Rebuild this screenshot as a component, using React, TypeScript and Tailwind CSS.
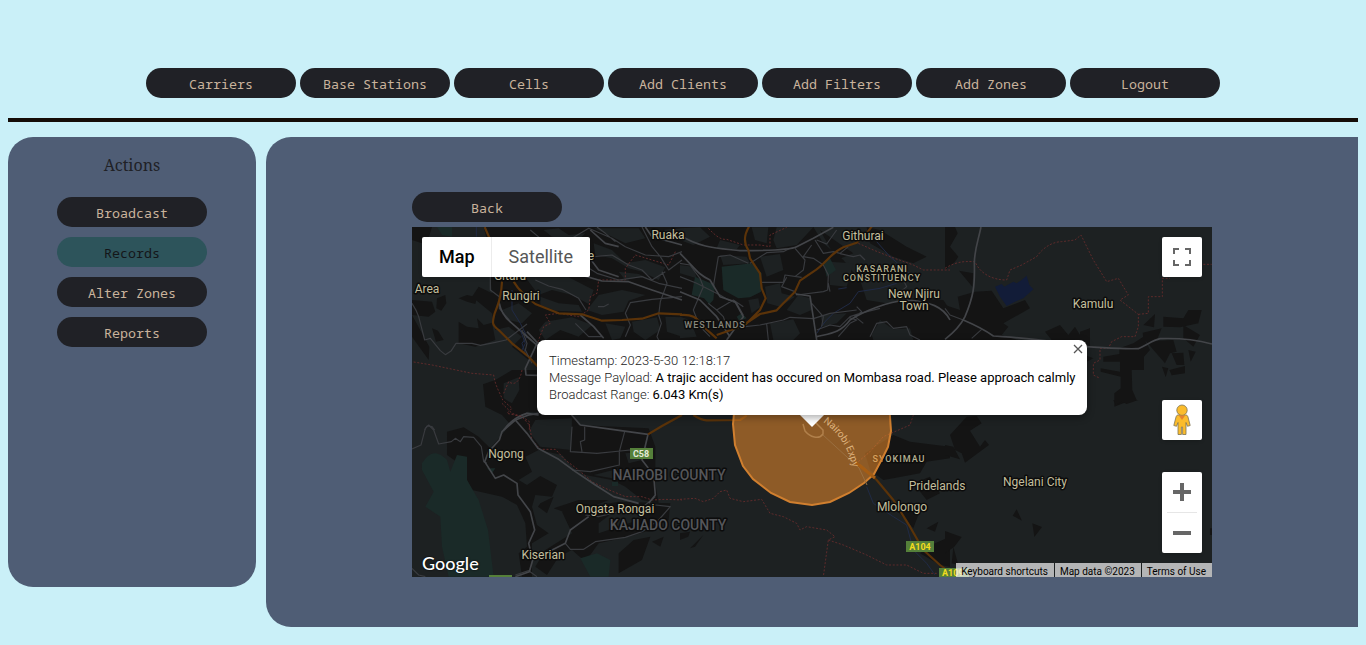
import React from "react";

const navItems = ["Carriers", "Base Stations", "Cells", "Add Clients", "Add Filters", "Add Zones", "Logout"];
const actionItems = ["Broadcast", "Records", "Alter Zones", "Reports"];

type PillProps = { label: string; active?: boolean };

function PillButton({ label, active = false }: PillProps) {
  return (
    <button
      type="button"
      className={
        "h-[30px] w-[150px] shrink-0 cursor-pointer rounded-full pt-[2px] font-['Noto_Sans_Mono','DejaVu_Sans_Mono',monospace] text-[13.333px] leading-[18px] " +
        (active ? "bg-[#2d545b] text-[#141619]" : "bg-[#202126] text-[#c9b39c]")
      }
    >
      {label}
    </button>
  );
}

type Tile = {
  x: number;
  y: number;
  built?: string;
  land?: string;
  parks?: string;
  water?: string;
  streams?: string;
  minor?: string;
  major?: string;
  highway?: string;
  border?: string;
};

/* Tile geometry is stored at three units per screen pixel. */
const tiles: Tile[] = [
  {
    x: 0,
    y: -47,
    built:
      "M0 141H60L50 175L30 190L0 180Z M215 141H810V540H350L300 500L330 470L290 440L250 450L240 400L180 350L200 320L240 340L235 290L280 290L230 200Z M75 355L100 345L103 370L88 392L73 385Z M140 355L165 345L195 352L190 372L165 365Z M0 360L60 365L70 395L50 410L0 405Z M0 405L52 500L50 540L0 470Z M140 425L165 440L200 445L195 415L215 435L240 428L250 480L190 500L140 490Z M60 445L78 452L95 480L72 485Z",
    land:
      "M395 150L440 145L470 165L520 160L500 180L420 170Z M545 145L680 145L700 175L640 190L590 165Z M545 190L600 210L640 250L700 240L760 262L740 300L690 275L650 265L600 235L550 225Z M340 292L470 292L545 330L530 372L480 345L420 330L380 345Z M385 350L440 370L500 375L510 395L430 392L385 375Z M560 345L630 330L700 345L650 362L635 395L570 405L525 390Z M400 425L480 412L540 435L500 470L445 450L400 480L380 450Z M580 430L640 440L625 475L600 480Z M660 425L735 412L745 450L700 480L665 455Z M760 410L810 412V470L765 455Z M270 390L320 370L360 400L330 430L290 420Z M620 275L680 282L720 300L690 290L640 300Z M755 150L810 145V180L770 172Z",
    parks: "M75 141H120V170L90 165Z",
    minor:
      "M0 370C10 385 15 395 20 410L38 480L55 475L85 512L100 524L118 512L132 490H180L205 496L250 487L282 480L345 432 M235 290V330L262 350V385L300 430 M355 150L385 175V195L400 205 M480 175L530 145L600 175L640 200L700 225L770 230L810 215 M400 212L440 225L500 245L555 280L620 300L690 290L740 310L810 325 M370 300L410 318L450 328L500 355L522 390 M490 430L530 470L570 470 M545 230L600 225L650 255L690 270L720 300L760 275 M690 141L720 200L745 230L770 270L810 240 M750 275L765 310L745 365L740 405L748 430L735 470L745 490 M810 350L720 358L655 368L640 400L655 435L640 470 M555 141L580 160L610 185 M558 380L575 380L590 372",
    major:
      "M262 370C268 400 280 415 300 430L340 465L378 498 M490 280L570 303L650 305L720 330L810 360 M530 230L560 270L620 290 M535 150L580 190L620 200 M700 141L720 170L810 195 M505 405L545 440L575 475",
    highway: "M218 141L235 180 M270 305C268 345 262 365 248 400C240 430 240 435 260 450L300 490L350 530 M305 305C320 330 340 350 370 372L440 400L510 403L570 422L630 420L690 416L740 400L810 403",
    border: "M790 215L770 255L670 225L640 265V300H560L555 340L535 350L530 390L500 410L440 400L400 405L415 430L395 440L380 480L370 500",
    streams: "M193 141V170 M300 330V390L325 430L345 470L330 490L340 520",
  },
  {
    x: 268,
    y: -7,
    built:
      "M0 21H400L430 70L490 120L540 180L560 240L620 250L700 235L790 240L810 270V360H0Z M420 30L520 100L470 120Z M560 21L600 30L680 80L740 110L700 130L640 110L570 70Z",
    land:
      "M0 25L60 22L90 50L40 75L0 60Z M120 60L180 75L170 88L110 85Z M215 22L265 22L260 70L225 60Z M290 22H400L350 75L290 85L280 60Z M0 135L40 140L50 175L0 160Z M120 105L200 110L210 130L130 135Z M255 200L300 190L305 220L345 230L300 260L262 250Z M270 310L340 298L360 340L340 360H280Z M355 225L390 235L395 270L360 285L320 270Z M445 125L520 130L500 200L450 195Z M205 240L235 235L240 262L215 280Z M575 345L600 300L640 328L690 325L700 360H580Z M0 290L30 300L50 350L0 355Z M420 285L500 280L470 310L430 320Z M240 110L300 102L310 150L260 170Z",
    parks:
      "M125 140L215 130L245 160L243 215L210 232L175 235L130 210Z M45 170L105 195L100 240L88 253L72 235L35 225Z M430 125L450 115L468 150L440 170Z M170 290L185 280L200 295L178 303Z",
    minor:
      "M0 130L30 135L60 175L70 200L40 270L60 320L90 350 M115 110L150 105L205 130 M115 110L100 200 M210 130L260 98L310 95L330 85 M345 85L375 120L370 150L345 170 M245 187H310L315 165L365 172 M320 172L305 200L345 215L350 225L430 215L443 210L445 165L430 135L400 115L370 110L395 75 M405 60L430 100L460 95L480 100L505 80 M410 60L440 72L470 30 M480 101L520 110L540 105L555 120 M670 180L680 200L662 215V240 M450 215L445 190 M0 170L50 190L120 225L145 240L170 250L190 285 M85 250L110 270L130 290L140 320 M195 320L240 315L310 300L330 292L400 296L450 280L530 270 M260 312L265 360 M410 330L450 315L480 320L510 290L540 280L600 265 M508 293L530 300L510 310L475 350 M570 350L590 310L620 305L640 325L680 320L690 345L720 360 M530 260L545 275L525 290L550 310 M395 250L430 290L425 320 M110 270L160 240L190 260",
    major:
      "M0 45C60 85 120 85 180 92C270 92 330 90 350 80L400 55L460 22 M0 100C50 150 50 160 90 180L120 230L165 245L190 290L140 360 M348 222L390 228L398 280L410 360 M410 350C450 340 480 340 510 300C550 275 620 245 680 240C750 245 790 260 810 300 M0 215L60 240L110 290L150 350",
    highway:
      "M0 285C35 282 50 290 70 320L110 355 M207 20C195 40 188 65 205 90L210 115L240 160L245 205L257 235L240 270L195 315L110 345 M195 312L240 282L290 271L310 250L345 215L360 182L400 155C440 130 450 100 490 82L530 68L560 40L575 20",
    border: "M85 25C105 45 120 60 140 58L190 75H240L270 80V45L320 22 M535 70L580 90L630 110L700 135L730 150L810 150",
    streams: "M590 65L630 110L700 170 M410 340L435 305L460 280L510 250L535 215L600 205L650 190 M475 207L500 203",
  },
  {
    x: 533,
    y: -7,
    built:
      "M0 21H30L38 40L15 80L40 110L30 125L0 150Z M42 152L85 160L82 200Z M0 255L45 270L38 230L90 215L140 212L175 265L240 240L255 265L175 310L190 320L170 345L220 360H0Z M300 335L345 315L370 345L390 320L405 345L435 325V380L320 360Z",
    water: "M150 200L170 192L178 200L205 185L215 190L230 180L245 167L253 195L265 208L235 235L210 245L185 258L165 230Z",
    minor: "M80 355L110 328 M0 265L15 285L55 300",
    major: "M108 21C100 60 88 90 88 130C90 200 85 230 60 290C50 310 30 335 0 358 M55 300C90 315 120 330 145 348C200 352 260 355 320 365L430 381",
    border:
      "M0 145C40 120 70 125 90 125C105 160 140 180 185 180L195 150L230 135L275 110C300 75 330 65 350 65L390 60L408 45L445 120L485 185L520 175L550 225L525 240L580 283L580 320L570 350L530 350L500 365L490 385L465 385V420L445 430V465L465 475 M580 283L610 280V230H652V175H675 M775 133H800",
  },
  {
    x: 668,
    y: 83,
    built:
      "M118 115L160 100L190 80L210 120L192 140V180H155L157 240L170 270L130 280L103 290V250L122 235V200L62 185V175L120 185V155H70V140L118 132Z M190 45L225 12L222 52Z M250 20L310 25L325 0H365L355 40L300 52L250 50Z M310 45L360 75L340 110L310 85Z M188 68L245 55L230 92L280 90L290 125L270 130L255 160L190 85Z M275 130L310 128L313 165L290 165Z M325 120L347 125L332 155Z M246 170L265 175L257 202Z M268 180L315 168V190L275 196Z M0 65L30 55V100H0Z M0 130L40 145L20 155H0Z",
    major: "M20 110C80 113 120 118 175 116C200 105 220 90 240 86C290 84 350 90 396 102",
  },
  {
    x: 0,
    y: 73,
    built: "M213 253L250 240L300 210H480V390H310L270 345L220 320Z",
    land: "M275 250L320 232L322 270L300 310L275 295Z M320 350L345 335L480 345V390H330Z",
    minor: "M330 90L345 130L340 150L360 190 M38 390L45 378L60 380L68 390",
    major: "M345 95L378 130 M375 130L340 205L342 225L375 226 M275 390C290 370 310 350 345 340L380 345",
    highway: "M350 170L378 200",
    border: "M5 186L60 195L180 220L245 225C250 260 265 280 272 300L300 325L285 340L330 350L352 365V390 M330 210C325 240 310 260 290 245L275 280",
    streams: "M325 90L340 130L330 150",
  },
  {
    x: 0,
    y: 173,
    built:
      "M105 95L155 82L200 110L235 145L290 80L340 40H480L500 75L710 85L730 140V250L740 310L690 300L640 260L600 240L520 225L485 205L450 165L380 150L340 170L360 215L320 240L345 255L385 228L435 255L420 290L370 285L360 320L375 375L410 400L360 430V530H330L320 460L345 440L340 370L315 315L270 290L180 270L140 190L105 165Z M385 310L425 290L405 340L378 320Z M450 335L620 305L775 310L770 360L700 395L650 410L560 430L520 485L480 450L440 470L405 525L370 500L400 450L480 400Z M425 325L500 300L590 300L480 345Z M620 460L665 420L715 410L690 480L620 520Z M720 425L755 410L745 440Z",
    land: "M370 60L480 55L478 150L430 145L385 140L350 95Z M640 160L700 155L690 180L650 190Z M545 225L625 205L650 240L600 235Z M600 340L700 320L680 360L560 400L560 370Z",
    parks:
      "M30 190C50 160 70 145 105 180L115 215L135 165L165 170V240L200 300L228 390L245 530H110L90 440L85 350L40 320L65 275L30 210Z M505 475L555 460L595 480L590 530H535Z M225 205L250 205L240 220Z M600 245H618V258H600Z",
    minor:
      "M0 147L27 135L40 85L50 75L65 90L80 132L118 125L130 115L145 125L155 110L185 112L208 140L215 185L225 190 M480 80L475 155L555 160L625 153L705 145 M518 80V120L505 125L510 155 M638 95L622 155V195L535 215L480 210 M730 290L700 315L560 350L520 345 M730 315L775 320L740 360L690 395L640 412L550 425L515 448H475L460 430 M0 505L20 525L40 530 M310 525L350 512L375 530",
    major:
      "M380 40L350 45L310 60L270 95L262 120L230 155L218 185L250 235L275 225L315 250L318 285L355 335L368 390L350 430L362 480L352 515L310 530 M310 60L345 100L378 145L440 178L490 215L550 255L605 290L680 310 M475 40L505 75L600 88L708 103L690 180L725 225L730 285L710 310 M410 455L460 430L475 390L530 350",
    highway: "M708 103L750 78L810 45",
    border: "M270 10L300 40L330 50L352 75L360 120L385 148L430 148L460 180L500 210L540 245L580 265L640 290L690 290L720 300L760 298L810 300",
  },
  {
    x: 268,
    y: 173,
    built:
      "M555 160L640 105L690 125L810 140V175L740 185L720 220L640 235L610 240L570 210Z M700 250L750 230L780 280L740 300Z M640 320L700 310L715 345L700 385Z M740 385L775 365L765 395Z M720 460L765 430L810 410V500L780 495Z M30 445L70 405L45 440Z M0 400L30 395L25 410L0 420Z",
    highway: "M40 45C55 55 65 60 80 61L180 60L200 47 M540 195L590 240L640 300L690 380L730 450L780 495L800 510",
    border:
      "M0 298L45 295L70 305L100 295L120 275L140 270L150 295L190 305L245 298L270 340L310 350L350 370L360 390L380 380L440 390L465 410L445 420L430 530 M445 420L490 435L560 465L620 495L680 495L730 520L770 520 M535 185L570 155L610 110L690 75L700 45",
    streams: "M560 260L580 310L640 350L680 375L700 450L740 490L765 525",
  },
  {
    x: 533,
    y: 173,
    built:
      "M15 105L65 50L95 48L110 70L75 92L105 140L120 120L132 135L60 188L50 160L30 150Z M0 135L25 140L45 178L0 165Z M203 347L215 328L231 362Z M262 370L291 381L268 411Z M0 393L50 411L28 440L0 460Z M25 440L40 495L20 490Z M505 0H580L545 12L530 5L512 15Z M795 385H802V405H795Z",
  },
];

function TileShapes({ tile }: { tile: Tile }) {
  return (
    <g transform={`translate(${tile.x} ${tile.y}) scale(0.33333)`}>
      <path d={tile.built} fill="#141414" />
      <path d={tile.land} fill="#1d2122" />
      <path d={tile.parks} fill="#1a2a28" />
      <path d={tile.water} fill="#121c38" />
    </g>
  );
}

function TileLines({ tile }: { tile: Tile }) {
  return (
    <g transform={`translate(${tile.x} ${tile.y}) scale(0.33333)`} fill="none" strokeLinejoin="round">
      <path d={tile.streams} stroke="#202a45" strokeWidth="3" />
      <path d={tile.border} stroke="#6a2c2c" strokeWidth="2.5" strokeDasharray="6 5" />
      <path d={tile.minor} stroke="#393b3f" strokeWidth="3.5" />
      <path d={tile.major} stroke="#434549" strokeWidth="5" />
      <path d={tile.highway} stroke="#5b3309" strokeWidth="6.5" />
    </g>
  );
}

type Label = { text: string; x: number; y: number; kind: "place" | "district" | "dim" | "county" };

const labels: Label[] = [
  { text: "Ruaka", x: 256, y: 12, kind: "place" },
  { text: "Githurai", x: 451, y: 13, kind: "place" },
  { text: "Gitaru", x: 98, y: 53, kind: "place" },
  { text: "e", x: 179, y: 33, kind: "place" },
  { text: "Area", x: 15, y: 66, kind: "place" },
  { text: "Rungiri", x: 109, y: 73, kind: "place" },
  { text: "KASARANI", x: 470, y: 45, kind: "district" },
  { text: "CONSTITUENCY", x: 470, y: 54, kind: "district" },
  { text: "New Njiru", x: 502, y: 71, kind: "place" },
  { text: "Town", x: 502, y: 83, kind: "place" },
  { text: "Kamulu", x: 681, y: 81, kind: "place" },
  { text: "WESTLANDS", x: 303, y: 101, kind: "dim" },
  { text: "Ngong", x: 94, y: 231, kind: "place" },
  { text: "NAIROBI COUNTY", x: 257, y: 253, kind: "county" },
  { text: "KAJIADO COUNTY", x: 256, y: 303, kind: "county" },
  { text: "Ongata Rongai", x: 203, y: 286, kind: "place" },
  { text: "Kiserian", x: 131, y: 332, kind: "place" },
  { text: "SYOKIMAU", x: 487, y: 235, kind: "district" },
  { text: "Pridelands", x: 525, y: 263, kind: "place" },
  { text: "Mlolongo", x: 490, y: 284, kind: "place" },
  { text: "Ngelani City", x: 623, y: 259, kind: "place" },
];

const labelStyles = {
  place: "fill-[#c3bf9d] text-[12px] font-normal",
  district: "fill-[#b5b192] text-[9px] font-medium tracking-[1px]",
  dim: "fill-[#86867a] text-[9px] font-medium tracking-[1px]",
  county: "fill-[#55565a] text-[14px] font-medium",
};

function MapCanvas() {
  return (
    <svg
      viewBox="0 0 800 350"
      preserveAspectRatio="xMidYMid slice"
      className="absolute inset-0 size-full font-['Roboto',sans-serif]"
      role="img"
      aria-label="Map of Nairobi"
    >
      <defs>
        <path id="expy" d="M411 195C425 205 436 217 442 246" />
      </defs>
      <rect width="800" height="350" fill="#1d2122" />
      {tiles.map((tile, i) => (
        <TileShapes key={i} tile={tile} />
      ))}
      {tiles.map((tile, i) => (
        <TileLines key={i} tile={tile} />
      ))}

      {labels.map((l) => (
        <text
          key={l.text}
          x={l.x}
          y={l.y}
          textAnchor="middle"
          stroke="#0c0c0c"
          strokeWidth="3"
          strokeLinejoin="round"
          paintOrder="stroke"
          className={labelStyles[l.kind]}
        >
          {l.text}
        </text>
      ))}

      <g className="text-[9px] font-bold">
        <rect x="218" y="221" width="23" height="11" fill="#55803a" />
        <text x="229" y="230" textAnchor="middle" fill="#e4ead8">C58</text>
        <rect x="494" y="314" width="28" height="11" fill="#55803a" />
        <text x="508" y="323" textAnchor="middle" fill="#f2dc1d">A104</text>
        <rect x="527" y="341" width="30" height="11" fill="#55803a" />
        <text x="530" y="349" fill="#f2dc1d">A109</text>
        <rect x="77" y="348" width="23" height="4" fill="#55803a" />
      </g>

      <polygon
        points="400,118 416,120 431,125 446,133 459,144 470,159 477,176 479,204 476,220 470,232 462,247 452,256 437,266 418,275 400,278 378,275 359,266 341,252 331,239 323,218 321,197 323,176 331,158 343,142 359,128 378,120"
        fill="#f7922c"
        fillOpacity="0.52"
        stroke="#d07f2f"
        strokeWidth="2"
      />
      <path d="M391 197L393 204C398 210 407 213 411 207L411 203L402 194" fill="none" stroke="#b1804b" strokeWidth="1.5" />
      <path d="M411 208L447 241L455 258" fill="none" stroke="#9a6f40" strokeWidth="1" />
      <path d="M443 235L463 251" fill="none" stroke="#a55d14" strokeWidth="3" />
      <text className="fill-[#deb27c] text-[10px]">
        <textPath href="#expy">Nairobi Expy</textPath>
      </text>
    </svg>
  );
}

function Pegman() {
  return (
    <svg viewBox="0 0 18 32" className="h-[32px] w-[18px]" aria-hidden="true">
      <g fill="#fbbc2c" stroke="#7d7454" strokeWidth="0.8" strokeLinejoin="round">
        <path d="M5.500 11H12.500C14 11 14.500 11.500 15 13L17.200 21.500L14.500 22.300L13 18.500V30.500H9.600V23H8.400V30.500H5V18.500L3.500 22.300L0.800 21.500L3 13C3.500 11.500 4 11 5.500 11Z" />
        <circle cx="9" cy="6.200" r="5.200" />
      </g>
      <path d="M5.800 11.500H12.200L9 16Z" fill="#e6822d" />
    </svg>
  );
}

function MapControls() {
  const box = "absolute right-[10px] flex w-[40px] flex-col rounded-[2px] bg-white shadow-[0_1px_4px_-1px_rgba(0,0,0,0.3)]";
  return (
    <>
      <div className="absolute top-[10px] left-[10px] flex h-[40px] rounded-[2px] bg-white text-[18px] leading-[40px] shadow-[0_1px_4px_-1px_rgba(0,0,0,0.3)]">
        <button type="button" className="pr-[16px] pl-[17px] font-medium text-black">Map</button>
        <button type="button" className="border-l border-[#ececec] px-[17px] text-[#565656]">Satellite</button>
      </div>

      <div className={box + " top-[10px]"}>
        <button type="button" aria-label="Toggle fullscreen view" className="flex h-[40px] items-center justify-center">
          <svg viewBox="0 0 18 18" className="size-[18px]" fill="#666666">
            <path d="M0 0V6H2V2H6V0Z M16 0H12V2H16V6H18V0Z M16 16H12V18H18V12H16Z M2 12H0V18H6V16H2Z" />
          </svg>
        </button>
      </div>

      <div className={box + " top-[173px]"}>
        <button type="button" aria-label="Drag Pegman onto the map to open Street View" className="flex h-[40px] items-center justify-center">
          <Pegman />
        </button>
      </div>

      <div className={box + " bottom-[24px]"}>
        <button type="button" aria-label="Zoom in" className="flex h-[40px] items-center justify-center">
          <svg viewBox="0 0 18 18" className="size-[18px]" fill="#666666">
            <path d="M7 0H11V7H18V11H11V18H7V11H0V7H7Z" />
          </svg>
        </button>
        <div className="mx-[5px] h-px bg-[#e6e6e6]" />
        <button type="button" aria-label="Zoom out" className="flex h-[40px] items-center justify-center">
          <svg viewBox="0 0 18 18" className="size-[18px]" fill="#666666">
            <path d="M0 7H18V11H0Z" />
          </svg>
        </button>
      </div>
    </>
  );
}

function InfoWindow() {
  return (
    <div className="absolute top-[113px] left-1/2 w-[550px] -translate-x-1/2">
      <div className="relative h-[75px] rounded-[8px] bg-white px-[12px] pt-[12px] text-[13px] leading-[17px] font-light whitespace-nowrap text-[#222222] shadow-[0_2px_7px_1px_rgba(0,0,0,0.3)]">
        <p>Timestamp: 2023-5-30 12:18:17</p>
        <p>
          Message Payload: <b className="font-normal text-black">A trajic accident has occured on Mombasa road. Please approach calmly</b>
        </p>
        <p>
          Broadcast Range: <b className="font-normal text-black">6.043 Km(s)</b>
        </p>
        <button type="button" aria-label="Close" className="absolute top-[4px] right-[4px] flex size-[10px] items-center justify-center">
          <svg viewBox="0 0 10 10" className="size-[10px]" stroke="#555555" strokeWidth="1.3">
            <path d="M1 1L9 9M9 1L1 9" />
          </svg>
        </button>
      </div>
      <svg viewBox="0 0 24 12" className="mx-auto h-[12px] w-[24px]" fill="#ffffff" aria-hidden="true">
        <path d="M0 0H24L12 12Z" />
      </svg>
    </div>
  );
}

function MapView() {
  return (
    <div className="relative h-[350px] w-full overflow-hidden bg-[#1d2122] font-['Roboto',sans-serif]">
      <MapCanvas />
      <MapControls />
      <InfoWindow />
      <a
        href="#google"
        aria-label="Google"
        className="absolute bottom-[2px] left-[10px] font-['Lato',sans-serif] text-[18px] leading-[24px] font-medium text-white [text-shadow:0_0_2px_#000]"
      >
        Google
      </a>
      <div className="absolute right-0 bottom-0 flex h-[14px] text-[10px] leading-[18px] text-black">
        <button type="button" className="bg-[#f5f5f5]/70 pt-px pr-[6px] pl-[5px] leading-[16px]">Keyboard shortcuts</button>
        <span className="ml-px bg-[#f5f5f5]/70 pr-[6px] pl-[5px]">Map data ©2023</span>
        <a href="#terms" className="ml-px bg-[#f5f5f5]/70 pr-[6px] pl-[5px]">Terms of Use</a>
      </div>
    </div>
  );
}

export default function App() {
  return (
    <div className="min-h-screen bg-[#caf0f8] px-2 pb-[18px]">
      <nav aria-label="Main" className="flex flex-wrap justify-center gap-1 border-b-4 border-[#140d08] pt-[68px] pb-[20px]">
        {navItems.map((item) => (
          <PillButton key={item} label={item} />
        ))}
      </nav>

      <div className="mt-[15px] flex items-start gap-[10px]">
        <aside className="flex min-h-[450px] w-[248px] shrink-0 flex-col items-center gap-[10px] rounded-[25px] bg-[#4f5d75] pt-4">
          <h2 className="mb-[10px] font-['Noto_Serif','Liberation_Serif',serif] text-[16px] leading-6 text-[#202126]">Actions</h2>
          {actionItems.map((item) => (
            <PillButton key={item} label={item} active={item === "Records"} />
          ))}
        </aside>

        <main className="min-w-0 flex-1 rounded-l-[25px] bg-[#4f5d75] pt-[55px] pb-[50px]">
          <div className="mx-auto flex max-w-[800px] flex-col items-start gap-[5px]">
            <PillButton label="Back" />
            <MapView />
          </div>
        </main>
      </div>
    </div>
  );
}
